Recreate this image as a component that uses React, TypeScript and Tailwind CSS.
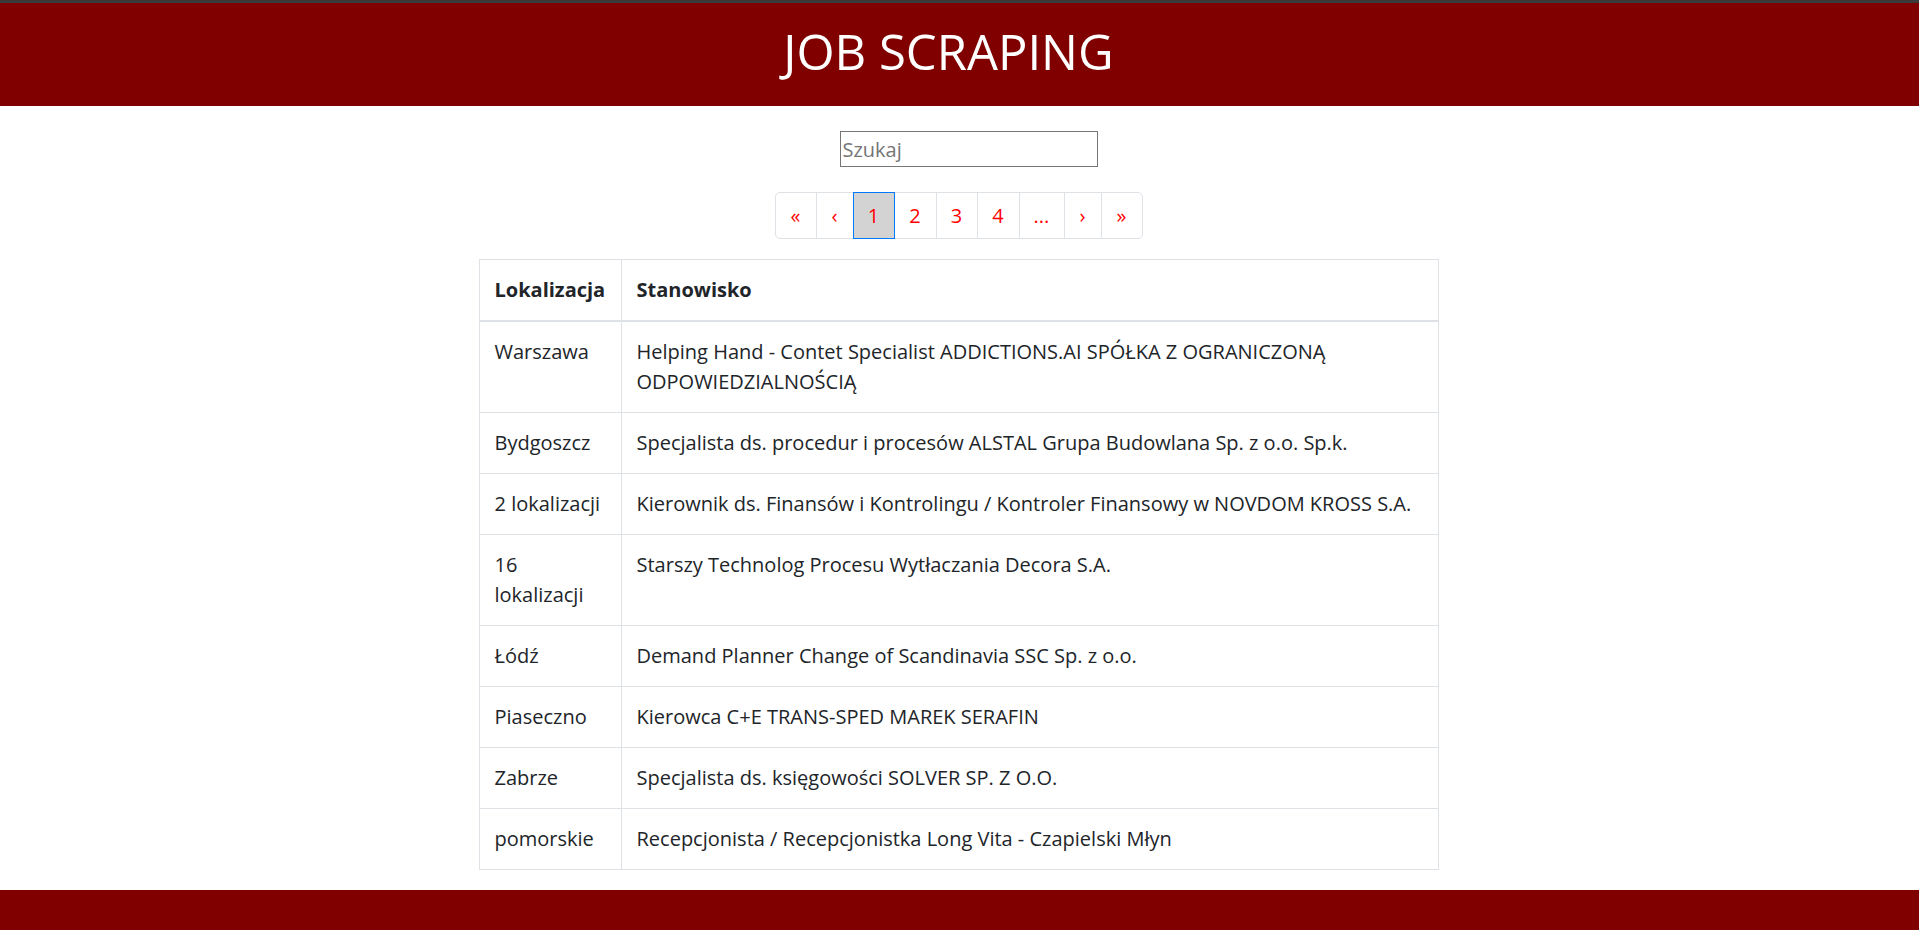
const jobs = [
  {
    place: "Warszawa",
    title: "Helping Hand - Contet Specialist ADDICTIONS.AI SPÓŁKA Z OGRANICZONĄ ODPOWIEDZIALNOŚCIĄ",
  },
  { place: "Bydgoszcz", title: "Specjalista ds. procedur i procesów ALSTAL Grupa Budowlana Sp. z o.o. Sp.k." },
  {
    place: "2 lokalizacji",
    title: "Kierownik ds. Finansów i Kontrolingu / Kontroler Finansowy w NOVDOM KROSS S.A.",
  },
  { place: "16 lokalizacji", title: "Starszy Technolog Procesu Wytłaczania Decora S.A." },
  { place: "Łódź", title: "Demand Planner Change of Scandinavia SSC Sp. z o.o." },
  { place: "Piaseczno", title: "Kierowca C+E TRANS-SPED MAREK SERAFIN" },
  { place: "Zabrze", title: "Specjalista ds. księgowości SOLVER SP. Z O.O." },
  { place: "pomorskie", title: "Recepcjonista / Recepcjonistka Long Vita - Czapielski Młyn" },
];

const pages = [
  { label: "«", w: "w-[42px]" },
  { label: "‹", w: "w-[38px]" },
  { label: "1", w: "w-[42px]", active: true },
  { label: "2", w: "w-[43px]" },
  { label: "3", w: "w-[42px]" },
  { label: "4", w: "w-[43px]" },
  { label: "...", w: "w-[46px]" },
  { label: "›", w: "w-[38px]" },
  { label: "»", w: "w-[42px]" },
];

function Pagination() {
  return (
    <nav className="mt-[25px] mr-[2px] flex justify-center">
      <ul className="flex">
        {pages.map((p, i) => (
          <li
            key={i}
            className={`-ml-px flex h-[47px] items-center justify-center border text-[20px] leading-[30px] text-[#ff0000] first:ml-0 first:rounded-l-[5px] last:rounded-r-[5px] ${p.w} ${
              p.active ? "relative z-10 border-[#007bff] bg-[#d3d3d3]" : "border-[#dee2e6] bg-white"
            }`}
          >
            {p.label}
          </li>
        ))}
      </ul>
    </nav>
  );
}

export default function App() {
  return (
    <div className="flex min-h-[930px] flex-col bg-white font-['Open_Sans',sans-serif] text-[#212529]">
      <header className="border-t-[3px] border-[#3a3a3a] bg-[#800000] pt-[18px] pb-[25px] text-center">
        <h1 className="pr-[22px] text-[49px] leading-[60px] font-normal text-white">JOB SCRAPING</h1>
      </header>

      <main className="flex flex-1 flex-col items-center">
        <input
          type="text"
          placeholder="Szukaj"
          className="mt-[25px] ml-[18px] h-[36px] w-[258px] border border-[#767676] px-[2px] text-[20px] placeholder:text-[#757575] outline-none"
        />

        <Pagination />

        <table className="mt-[20px] mr-[2px] mb-[20px] w-[960px] table-fixed border-collapse border border-[#dee2e6] text-left text-[20px] leading-[30px]">
          <colgroup>
            <col className="w-[142px]" />
            <col />
          </colgroup>
          <thead>
            <tr>
              <th className="border border-b-2 border-[#dee2e6] p-[15px] font-bold">Lokalizacja</th>
              <th className="border border-b-2 border-[#dee2e6] p-[15px] font-bold">Stanowisko</th>
            </tr>
          </thead>
          <tbody>
            {jobs.map((j) => (
              <tr key={j.title}>
                <td className="border border-[#dee2e6] p-[15px] align-top">{j.place}</td>
                <td className="border border-[#dee2e6] p-[15px] align-top">{j.title}</td>
              </tr>
            ))}
          </tbody>
        </table>
      </main>

      <footer className="h-[40px] bg-[#800000]" />
    </div>
  );
}
